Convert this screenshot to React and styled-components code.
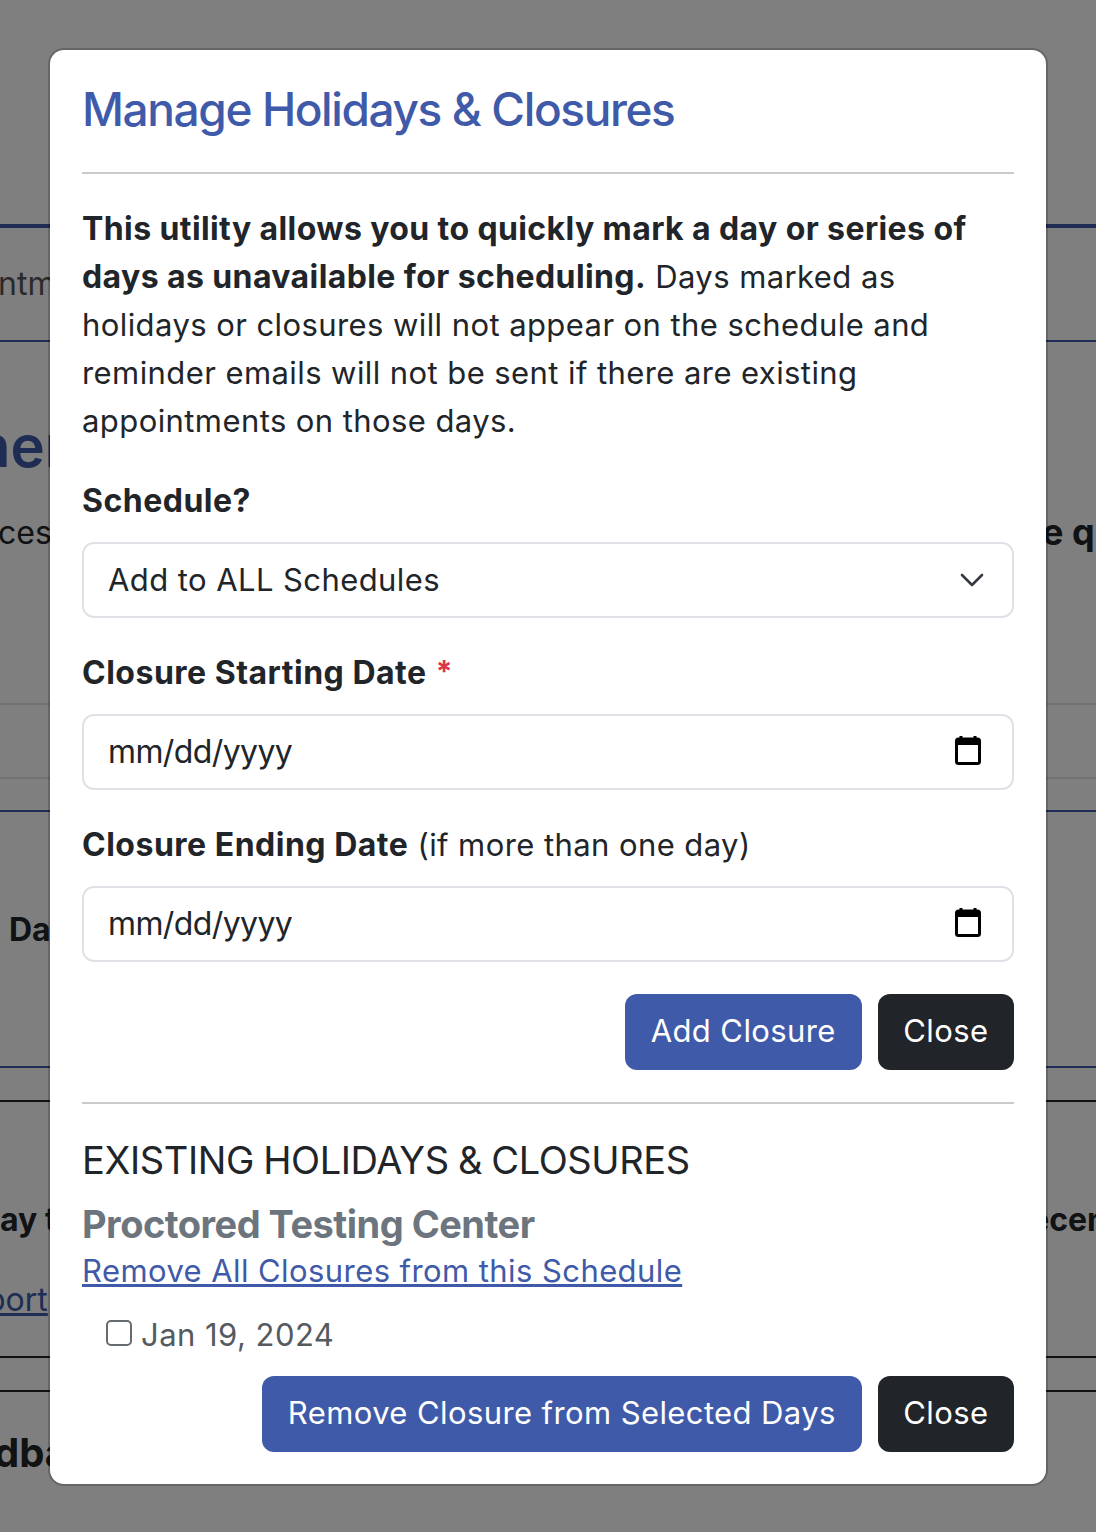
import React from "react"
import styled, { createGlobalStyle } from "styled-components"

const GlobalStyle = createGlobalStyle`
    * { box-sizing: border-box; }
    html, body { margin: 0; padding: 0; background: #fff; }
    body { font-family: Inter, "Liberation Sans", sans-serif; color: #212529; }
`

const Page = styled.div`
    position: relative;
    width: 1096px;
    height: 1532px;
    overflow: hidden;
    background: #fff;
`

const Rule = styled.div`
    height: ${props => props.$size}px;
    margin-top: ${props => props.$gap}px;
    background: ${props => props.$color};
`

const Band = styled.div`
    display: flex;
    align-items: center;
    justify-content: space-between;
    height: ${props => props.$height}px;
    padding-top: ${props => props.$top || 0}px;
    padding-bottom: ${props => props.$bottom || 0}px;
    white-space: nowrap;
`

const PageText = styled.span`
    font-size: ${props => props.$size || 32}px;
    font-weight: ${props => props.$weight || 400};
    color: ${props => props.$color || "#212529"};
    margin-left: ${props => props.$left || 0}px;
    margin-right: ${props => props.$right || 0}px;
    text-decoration: ${props => props.$underline ? "underline" : "none"};
`

const Backdrop = styled.div`
    position: absolute;
    inset: 0;
    background: rgba(0, 0, 0, 0.5);
`

const Modal = styled.div`
    position: absolute;
    top: 48px;
    left: 48px;
    width: 1000px;
    height: 1438px;
    padding: 32px;
    background: #fff;
    background-clip: padding-box;
    border: 2px solid rgba(0, 0, 0, 0.2);
    border-radius: 16px;
`

const Title = styled.h1`
    margin: 0;
    height: 90px;
    font-size: 46px;
    line-height: 54px;
    font-weight: 500;
    letter-spacing: -1.4px;
    color: #3f5aa9;
`

const Divider = styled.hr`
    margin: ${props => props.$top || 0}px 0 0;
    height: 2px;
    border: 0;
    background: #c9cacb;
`

const Intro = styled.p`
    margin: 31px 0 32px;
    font-size: 31px;
    line-height: 48px;
    letter-spacing: 0.42px;

    strong { font-size: 32px; font-weight: 700; letter-spacing: 0.4px; }
`

const Label = styled.label`
    display: block;
    font-size: 31px;
    line-height: 48px;
    letter-spacing: 0.42px;
    margin-bottom: 17px;

    strong { font-size: 32px; font-weight: 700; letter-spacing: 0.5px; }
    em {
        font-style: normal;
        font-weight: 700;
        font-size: 30px;
        line-height: 0;
        color: #dc3545;
        vertical-align: 2px;
    }
`

const Field = styled.div`
    position: relative;
    height: 76px;
    margin-bottom: 31px;
`

const Control = styled.input`
    display: block;
    width: 100%;
    height: 100%;
    padding: 0 24px 2px;
    font: inherit;
    font-size: ${props => props.$size || 31}px;
    letter-spacing: ${props => props.$spacing || 0}px;
    color: #212529;
    background: #fff;
    border: 2px solid #dee2e6;
    border-radius: 12px;
    appearance: none;
    outline: none;
`

const FieldIcon = styled.svg`
    position: absolute;
    top: ${props => props.$top}px;
    right: ${props => props.$right}px;
    pointer-events: none;
`

const Actions = styled.div`
    display: flex;
    justify-content: flex-end;
    gap: 16px;
    padding-top: ${props => props.$top || 0}px;
`

const Button = styled.button`
    height: 76px;
    padding: 0 ${props => props.$dark ? "25.5px" : "26px"} 4px;
    font: inherit;
    font-size: 31px;
    letter-spacing: 0.4px;
    color: #fff;
    background: ${props => props.$dark ? "#212529" : "#3f5aa9"};
    border: 0;
    border-radius: 12px;
`

const SectionTitle = styled.h2`
    margin: 32px 0 0;
    font-size: 38px;
    line-height: 48px;
    font-weight: 400;
    letter-spacing: -0.4px;
    word-spacing: -1px;
`

const ScheduleName = styled.h3`
    margin: 16px 0 0;
    font-size: 38px;
    line-height: 48px;
    font-weight: 700;
    letter-spacing: -0.52px;
    color: #6c757d;
`

const RemoveAll = styled.a`
    display: block;
    margin-top: 1px;
    font-size: 31px;
    line-height: 44px;
    letter-spacing: 0.42px;
    color: #3f5aa9;
    text-decoration: underline;
`

const DayRow = styled.label`
    display: flex;
    align-items: center;
    gap: 9px;
    margin: 17px 0 18px 24px;
    height: 48px;
    font-size: 31px;
    letter-spacing: 0.46px;
    color: #555a5f;
`

const DayCheck = styled.input`
    width: 26px;
    height: 26px;
    margin: 0;
    background: #fff;
    border: 2px solid #666b70;
    border-radius: 5px;
    appearance: none;
    transform: translateY(-1px);
`

const CalendarIcon = () => (
    <FieldIcon $top={22} $right={33} width="26" height="29" viewBox="0 0 26 29">
        <path d="M6 0v4M20 0v4" stroke="#000" strokeWidth="3" />
        <rect x="1.5" y="3" width="23" height="24.5" rx="2" fill="#fff" stroke="#000" strokeWidth="3" />
        <rect x="1.5" y="3" width="23" height="6" fill="#000" />
    </FieldIcon>
)

const DateField = () => (
    <Field>
        <Control type="text" value="mm/dd/yyyy" $size={32} $spacing={-0.6} readOnly />
        <CalendarIcon />
    </Field>
)

const App = () => {
    return (
        <>
            <GlobalStyle />
            <Page>
                <Rule $gap={224} $size={4} $color="#3f5aa9" />
                <Band $height={112} $bottom={2}>
                    <PageText $left={-2} $color="#555">ntm</PageText>
                </Band>
                <Rule $gap={0} $size={2} $color="#3f5aa9" />
                <Band $height={190} $top={18}>
                    <PageText $left={-25} $size={58} $weight={600} $color="#3f5aa9">ner</PageText>
                </Band>
                <Band $height={0}>
                    <PageText $left={-2}>ces</PageText>
                    <PageText $right={-21} $size={36} $weight={700}>e qu</PageText>
                </Band>
                <Rule $gap={171} $size={2} $color="#e4e5e6" />
                <Rule $gap={72} $size={2} $color="#e4e5e6" />
                <Rule $gap={31} $size={2} $color="#3f5aa9" />
                <Band $height={234}>
                    <PageText $left={9} $weight={700}>Day</PageText>
                </Band>
                <Rule $gap={20} $size={2} $color="#3f5aa9" />
                <Rule $gap={32} $size={2} $color="#212529" />
                <Band $height={197} $top={37}>
                    <PageText $weight={700}>ay to</PageText>
                    <PageText $right={-11} $weight={700}>ecen</PageText>
                </Band>
                <Band $height={0}>
                    <PageText $left={-14} $color="#3f5aa9" $underline>port</PageText>
                </Band>
                <Rule $gap={57} $size={2} $color="#212529" />
                <Rule $gap={32} $size={2} $color="#212529" />
                <Band $height={120}>
                    <PageText $left={-6} $size={40} $weight={700}>dback</PageText>
                </Band>
                <Backdrop />
                <Modal>
                    <Title>Manage Holidays &amp; Closures</Title>
                    <Divider />
                    <Intro>
                        <strong>This utility allows you to quickly mark a day or series of days as unavailable for scheduling.</strong>{" "}
                        Days marked as holidays or closures will not appear on the schedule and reminder emails will not be sent if there are existing appointments on those days.
                    </Intro>
                    <Label><strong>Schedule?</strong></Label>
                    <Field>
                        <Control as="select" defaultValue="all" $spacing={0.42}>
                            <option value="all">Add to ALL Schedules</option>
                        </Control>
                        <FieldIcon $top={30} $right={30} width="24" height="16" viewBox="0 0 24 16" fill="none">
                            <path d="M2 3l10 10L22 3" stroke="#343a40" strokeWidth="2.6" strokeLinecap="round" strokeLinejoin="round" />
                        </FieldIcon>
                    </Field>
                    <Label><strong>Closure Starting Date</strong> <em>*</em></Label>
                    <DateField />
                    <Label><strong>Closure Ending Date</strong> (if more than one day)</Label>
                    <DateField />
                    <Actions $top={1}>
                        <Button>Add Closure</Button>
                        <Button $dark>Close</Button>
                    </Actions>
                    <Divider $top={32} />
                    <SectionTitle>EXISTING HOLIDAYS &amp; CLOSURES</SectionTitle>
                    <ScheduleName>Proctored Testing Center</ScheduleName>
                    <RemoveAll href="#">Remove All Closures from this Schedule</RemoveAll>
                    <DayRow><DayCheck type="checkbox" />Jan 19, 2024</DayRow>
                    <Actions>
                        <Button>Remove Closure from Selected Days</Button>
                        <Button $dark>Close</Button>
                    </Actions>
                </Modal>
            </Page>
        </>
    )
}

export default App
